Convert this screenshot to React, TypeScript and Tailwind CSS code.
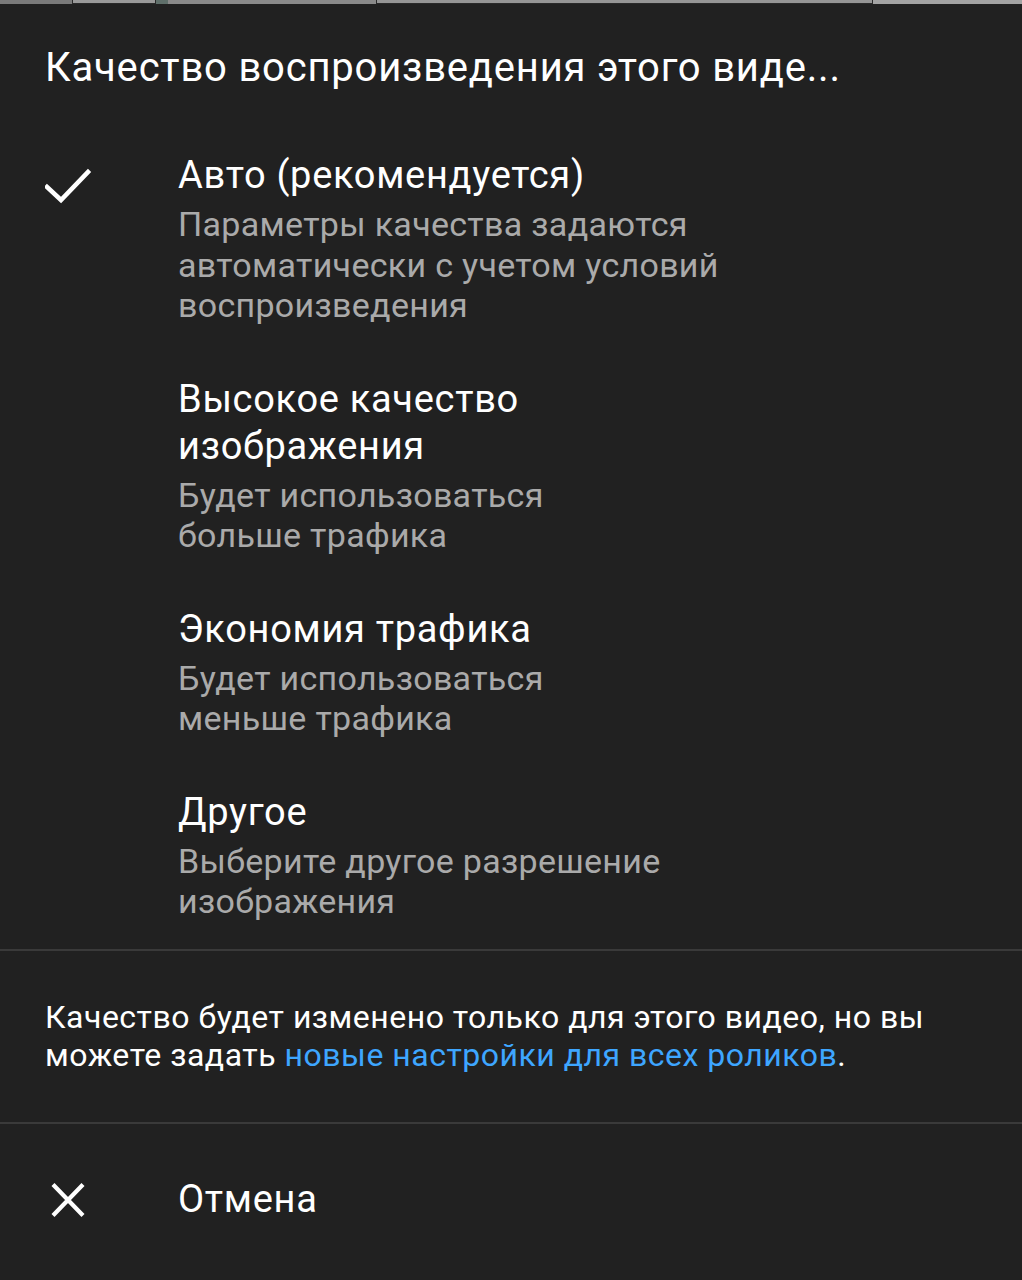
import React from 'react';

type Option = {
  title: string[];
  lines: string[];
  selected?: boolean;
};

const options: Option[] = [
  {
    title: ['Авто (рекомендуется)'],
    lines: ['Параметры качества задаются', 'автоматически с учетом условий', 'воспроизведения'],
    selected: true,
  },
  {
    title: ['Высокое качество', 'изображения'],
    lines: ['Будет использоваться', 'больше трафика'],
  },
  {
    title: ['Экономия трафика'],
    lines: ['Будет использоваться', 'меньше трафика'],
  },
  {
    title: ['Другое'],
    lines: ['Выберите другое разрешение', 'изображения'],
  },
];

const CheckIcon: React.FC = () => (
  <svg width="48" height="40" viewBox="0 0 48 40" fill="none">
    <polyline
      points="2,20 16,33 43,5"
      stroke="#ffffff"
      strokeWidth="4.5"
      strokeLinecap="square"
      strokeLinejoin="miter"
    />
  </svg>
);

const CloseIcon: React.FC = () => (
  <svg width="40" height="40" viewBox="0 0 40 40" fill="none">
    <path d="M5 4.5 L35 35.5 M35 4.5 L5 35.5" stroke="#ffffff" strokeWidth="4.2" />
  </svg>
);

const App: React.FC = () => {
  return (
    <div
      className="min-h-[1280px] w-full bg-[#212121] text-white"
      style={{ fontFamily: 'Roboto, "Noto Sans", sans-serif' }}
    >
      {/* Video strip behind the sheet */}
      <div className="flex h-[4px] bg-[#8d8d8d]">
        <div className="w-[72px] bg-[#7a7a7a]" />
        <div className="w-[84px] border-x border-b border-[#2a2a2a] bg-[#9a9a9a]" />
        <div className="w-[12px] bg-[#5f6f6a]" />
        <div className="w-[208px] bg-[#8a8a8a]" />
        <div className="w-[497px] border-x border-b border-[#2a2a2a] bg-[#969696]" />
        <div className="flex-1 bg-[#a3a3a3]" />
      </div>

      {/* Header */}
      <div className="flex h-[123px] items-start pl-[45px] pt-[40px]">
        <h2 className="text-[40px] leading-[48px] font-normal tracking-[0.8px]">
          Качество воспроизведения этого виде...
        </h2>
      </div>

      {/* Options */}
      <div className="pb-[2px]">
        {options.map((opt, i) => (
          <div key={i} className="flex py-[25px]">
            <div className="flex w-[178px] shrink-0 items-start pl-[45px] pt-[15px]">
              {opt.selected && <CheckIcon />}
            </div>
            <div>
              {opt.title.map((t) => (
                <div key={t} className="text-[38px] leading-[47px] tracking-[0.7px] text-white">
                  {t}
                </div>
              ))}
              <div className="mt-[5px]">
                {opt.lines.map((l) => (
                  <div key={l} className="text-[34px] leading-[40.5px] tracking-[0.3px] text-[#aaaaaa]">
                    {l}
                  </div>
                ))}
              </div>
            </div>
          </div>
        ))}
      </div>

      <div className="h-[2px] bg-[#3a3a3a]" />

      {/* Footer note */}
      <div className="px-[45px] pt-[47px] pb-[48px]">
        <p className="text-[32px] leading-[38px] tracking-[0.5px] text-white">
          Качество будет изменено только для этого видео, но вы
          <br />
          можете задать <span className="text-[#3ea6ff]">новые настройки для всех роликов</span>.
        </p>
      </div>

      <div className="h-[2px] bg-[#3a3a3a]" />

      {/* Cancel */}
      <div className="flex h-[152px] items-center">
        <div className="flex w-[178px] shrink-0 items-center pl-[48px]">
          <CloseIcon />
        </div>
        <span className="text-[38px] leading-[47px] tracking-[0.7px]">Отмена</span>
      </div>
    </div>
  );
};

export default App;
